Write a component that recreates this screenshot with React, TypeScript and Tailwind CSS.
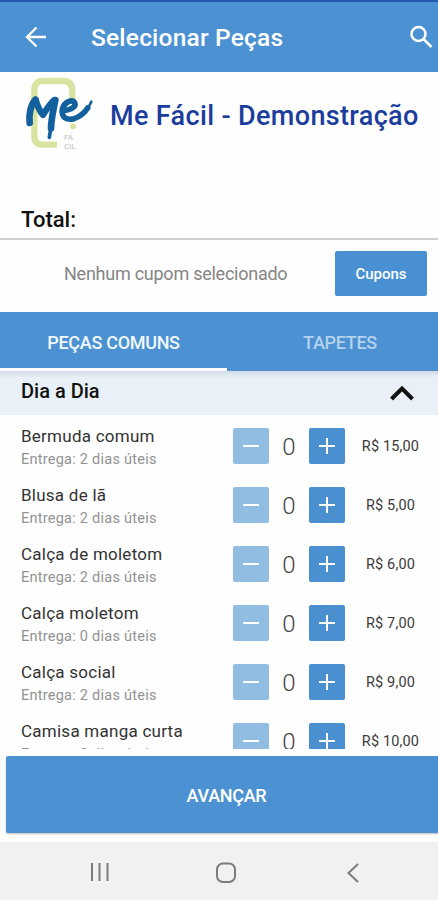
import React, { useState } from 'react';

interface Piece {
  id: number;
  name: string;
  delivery: string;
  price: string;
}

const pieces: Piece[] = [
  { id: 1, name: 'Bermuda comum', delivery: 'Entrega: 2 dias úteis', price: 'R$ 15,00' },
  { id: 2, name: 'Blusa de lã', delivery: 'Entrega: 2 dias úteis', price: 'R$ 5,00' },
  { id: 3, name: 'Calça de moletom', delivery: 'Entrega: 2 dias úteis', price: 'R$ 6,00' },
  { id: 4, name: 'Calça moletom', delivery: 'Entrega: 0 dias úteis', price: 'R$ 7,00' },
  { id: 5, name: 'Calça social', delivery: 'Entrega: 2 dias úteis', price: 'R$ 9,00' },
  { id: 6, name: 'Camisa manga curta', delivery: 'Entrega: 2 dias úteis', price: 'R$ 10,00' },
];

const Logo: React.FC = () => (
  <svg width="76" height="76" viewBox="0 6 228 228" fill="none" className="shrink-0">
    {/* phone outline */}
    <path
      d="M105 212H62c-16 0-25-8-25-26V48c0-17 8-27 25-27h62c18 0 27 10 27 27V75"
      stroke="#d9e4a3"
      strokeWidth="19"
    />
    <circle cx="153" cy="157" r="9" fill="#d9e4a3" />
    {/* brush lettering */}
    <g stroke="#13609f" strokeLinecap="round" strokeLinejoin="round">
      <path d="M23 147C20 122 26 92 40 77" strokeWidth="20" />
      <path d="M41 77C46 95 54 113 63 123C71 110 83 90 97 78" strokeWidth="19" />
      <path d="M100 78C95 105 88 130 87 163" strokeWidth="20" />
      <path d="M86 165L82 190" strokeWidth="11" />
      <path d="M127 109C150 108 163 96 158 86C151 75 128 82 121 105C117 130 134 140 156 134C175 128 187 117 197 102" strokeWidth="17" />
      <path d="M191 110C199 101 204 93 208 83" strokeWidth="8" />
    </g>
    <g fill="#bdbdbd" fontFamily="Roboto, sans-serif" fontSize="24">
      <text x="126" y="198">FÁ</text>
      <text x="126" y="225">CIL</text>
    </g>
  </svg>
);

const PieceRow: React.FC<{ piece: Piece }> = ({ piece }) => {
  const [amount, setAmount] = useState(0);

  return (
    <div className="flex h-[59px] shrink-0 pl-[21px]">
      <div className="w-[212px] pt-[9px]">
        <p className="text-[17px] leading-[21px] tracking-[0.25px] text-[#333333]">{piece.name}</p>
        <p className="mt-[3px] text-[14.500px] leading-[19px] tracking-[0.25px] text-[#929292]">{piece.delivery}</p>
      </div>
      <div className="flex pt-[11px]">
        <button
          onClick={() => setAmount(Math.max(0, amount - 1))}
          className="flex size-9 items-center justify-center rounded-[2px] bg-[#92bde3]"
        >
          <span className="h-[2px] w-4 bg-white" />
        </button>
        <span className="w-[40px] text-center text-[24px] font-light leading-[38px] text-[#444444]">{amount}</span>
        <button
          onClick={() => setAmount(amount + 1)}
          className="flex size-9 items-center justify-center rounded-[2px] bg-[#4a90d0]"
        >
          <svg width="16" height="16" viewBox="0 0 16 16" stroke="white" strokeWidth="2">
            <path d="M8 0v16M0 8h16" />
          </svg>
        </button>
      </div>
      <p className="w-[91px] pt-[11px] text-center text-[14.500px] leading-[37px] tracking-[0.15px] text-[#3b3b3b]">{piece.price}</p>
    </div>
  );
};

export default function App() {
  const [tab, setTab] = useState('comuns');

  return (
    <div className="flex h-[900px] w-[438px] flex-col overflow-hidden bg-[#fefefe] font-[Roboto,sans-serif]">
      <header className="flex h-[72px] shrink-0 items-center border-t-2 border-[#2257b0] bg-[#4c92d2] pl-[25px] text-white">
        <svg width="22" height="22" viewBox="0 0 22 22" fill="none" stroke="white" strokeWidth="2.300">
          <path d="M21 11H2.500M11.500 1.500L2 11l9.500 9.500" />
        </svg>
        <h1 className="ml-[44px] w-[318px] shrink-0 whitespace-nowrap pt-[2px] text-[24.500px] font-medium leading-[30px] tracking-[0.2px]">
          Selecionar Peças
        </h1>
        <svg width="24" height="24" viewBox="0 0 24 24" fill="none" stroke="white" strokeWidth="2.500" className="shrink-0">
          <circle cx="9.500" cy="9" r="7" />
          <path d="M14.500 14l8 8" />
        </svg>
      </header>

      <div className="flex h-[130px] shrink-0 pl-[22px] pt-[4px]">
        <Logo />
        <h2 className="ml-[12px] whitespace-nowrap pt-[23px] text-[27px] font-medium leading-[34px] tracking-[0.35px] text-[#1b3d9c]">
          Me Fácil - Demonstração
        </h2>
      </div>

      <div className="h-[38px] shrink-0 border-b-2 border-[#cfcfcd] pl-[21px] pt-[4px]">
        <p className="text-[22px] font-medium leading-[28px] text-[#111111]">Total:</p>
      </div>

      <div className="flex h-[72px] shrink-0 pl-[64px] pt-[11px]">
        <p className="w-[271px] pt-[11px] text-[18px] leading-[24px] tracking-[-0.25px] text-[#858585]">Nenhum cupom selecionado</p>
        <button className="h-[45px] w-[92px] rounded-[2px] bg-[#4890d2] pt-[2px] text-[15px] font-medium text-white">Cupons</button>
      </div>

      <nav className="flex h-[59px] w-[453px] shrink-0 bg-[#4c92d2] text-[18px] font-medium tracking-[-0.3px]">
        <button
          onClick={() => setTab('comuns')}
          className={`w-[227px] border-b-[3px] pt-[4px] text-[#f1f8fd] ${tab === 'comuns' ? 'border-white' : 'border-transparent'}`}
        >
          PEÇAS COMUNS
        </button>
        <button
          onClick={() => setTab('tapetes')}
          className={`w-[226px] border-b-[3px] pt-[4px] text-[#b3d3ee] ${tab === 'tapetes' ? 'border-white' : 'border-transparent'}`}
        >
          TAPETES
        </button>
      </nav>

      <div className="flex h-[44px] shrink-0 justify-between bg-[#e9f0f8] bg-linear-to-b from-[#d3dce7] to-[#e9f0f8] to-[7px] pl-[21px] pr-[24px]">
        <h3 className="pt-[8px] text-[20px] font-medium leading-[25px] text-[#111111]">Dia a Dia</h3>
        <svg width="24" height="16" viewBox="0 0 24 16" fill="none" stroke="#111111" strokeWidth="4" className="mt-[14px]">
          <path d="M1.500 14L12 3.500L22.500 14" />
        </svg>
      </div>

      <main className="flex h-[334px] shrink-0 flex-col overflow-hidden pt-[2px]">
        {pieces.map((piece) => (
          <PieceRow key={piece.id} piece={piece} />
        ))}
      </main>

      <div className="h-[93px] shrink-0 pl-[6px] pt-[7px]">
        <button className="h-[77px] w-[441px] rounded-[2px] bg-[#4c92d2] pt-[2px] text-[18px] font-medium tracking-[-0.3px] text-white shadow-[0_1px_2px_rgba(0,0,0,0.25)]">
          AVANÇAR
        </button>
      </div>

      <footer className="flex h-[58px] shrink-0 bg-[#f1f1f1] pl-[90px] pt-[20px]">
        <svg width="20" height="20" viewBox="0 0 20 20" stroke="#7c7c7c" strokeWidth="2">
          <path d="M2 1v18M9.500 1v18M17.500 1v18" />
        </svg>
        <svg width="22" height="22" viewBox="0 0 22 22" fill="none" stroke="#7c7c7c" strokeWidth="2" className="ml-[105px]">
          <rect x="2" y="1.500" width="18" height="18.500" rx="6" />
        </svg>
        <svg width="14" height="22" viewBox="0 0 14 22" fill="none" stroke="#7c7c7c" strokeWidth="2" className="ml-[109px]">
          <path d="M12 2L2.500 11l9.500 9" />
        </svg>
      </footer>
    </div>
  );
}
